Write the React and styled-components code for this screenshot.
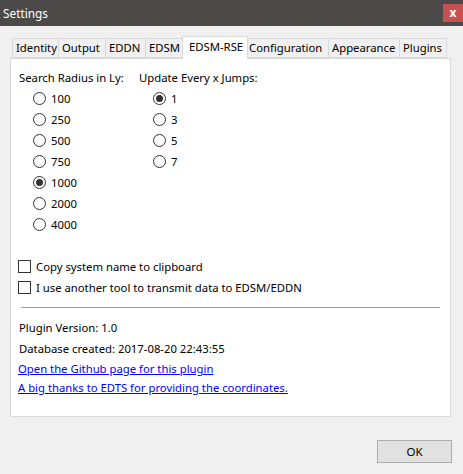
import React from "react";
import styled, { createGlobalStyle } from "styled-components";

const Global = createGlobalStyle`
  html, body { margin: 0; padding: 0; }
  body {
    font-family: "Noto Sans", "Open Sans", sans-serif;
    font-size: 11.3px;
    color: #000;
    background: #f0f0f0;
  }
`;

const Window = styled.div`
  width: 463px;
  height: 474px;
  display: flex;
  flex-direction: column;
  background: #f0f0f0;
  overflow: hidden;
`;

const TitleBar = styled.div`
  height: 26px;
  flex: none;
  background: #4b4a48;
  display: flex;
  align-items: flex-start;
  justify-content: space-between;
  color: #fff;
`;

const Title = styled.span`
  padding: 4px 0 0 3px;
  line-height: 18px;
  font-size: 11.8px;
`;

const CloseButton = styled.div`
  width: 20px;
  height: 18px;
  margin-top: 4px;
  background: #c75050;
  color: #fff;
  font-weight: bold;
  font-size: 12px;
  line-height: 16px;
  display: flex;
  align-items: center;
  justify-content: center;
`;

const Body = styled.div`
  flex: 1;
  display: flex;
  flex-direction: column;
  padding: 10px 12px 12px 10px;
`;

const TabStrip = styled.div`
  height: 22px;
  display: flex;
  align-items: flex-end;
  padding-left: 2px;
  position: relative;
  z-index: 1;
`;

const Tab = styled.div`
  box-sizing: border-box;
  width: ${(p) => p.$w}px;
  height: ${(p) => (p.$active ? 23 : 20)}px;
  margin: ${(p) => (p.$active ? "0 -2px -1px -2px" : "0")};
  padding-left: ${(p) => (p.$active ? 6 : 3)}px;
  background: ${(p) => (p.$active ? "#fff" : "#f0f0f0")};
  border: 1px solid #d9d9d9;
  border-bottom: ${(p) => (p.$active ? "none" : "1px solid #d9d9d9")};
  border-left: ${(p) => (p.$first || p.$active ? "1px solid #d9d9d9" : "none")};
  display: flex;
  align-items: center;
  line-height: 18px;
  white-space: nowrap;
  position: relative;
  z-index: ${(p) => (p.$active ? 2 : 1)};
  ${(p) => (p.$active ? "padding-bottom: 3px;" : "")}
`;

const Panel = styled.div`
  box-sizing: border-box;
  height: 359px;
  background: #fff;
  border: 1px solid #d9d9d9;
  padding: 9px 10px 0 8px;
  display: flex;
  flex-direction: column;
`;

const Columns = styled.div`
  display: flex;
`;

const Column = styled.div`
  width: ${(p) => p.$w}px;
  display: flex;
  flex-direction: column;
`;

const Heading = styled.div`
  height: 20px;
  line-height: 20px;
`;

const RadioRow = styled.label`
  height: 21px;
  display: flex;
  align-items: center;
  padding-left: 14px;
  gap: 5px;
`;

const RadioCircle = styled.span`
  box-sizing: border-box;
  width: 13px;
  height: 13px;
  border-radius: 50%;
  border: 1px solid #333;
  background: #fff;
  display: flex;
  align-items: center;
  justify-content: center;
  &::after {
    content: "";
    width: 7px;
    height: 7px;
    border-radius: 50%;
    background: ${(p) => (p.$checked ? "#333" : "transparent")};
  }
`;

const CheckGroup = styled.div`
  margin-top: 21px;
  display: flex;
  flex-direction: column;
`;

const CheckRow = styled.label`
  height: 21px;
  display: flex;
  align-items: center;
  margin-left: -1px;
  gap: 5px;
`;

const CheckBox = styled.span`
  box-sizing: border-box;
  width: 13px;
  height: 13px;
  border: 1px solid #333;
  background: #fff;
`;

const Separator = styled.div`
  height: 1px;
  margin: 9px 0 9px 2px;
  width: 419px;
  background: #a0a0a0;
`;

const InfoLine = styled.div`
  height: 21px;
  line-height: 21px;
`;

const LinkLine = styled.a`
  display: block;
  height: 19px;
  line-height: 19px;
  color: #0000ff;
  text-decoration: underline;
  margin-left: -1px;
`;

const Footer = styled.div`
  display: flex;
  justify-content: flex-end;
  margin-top: 23px;
`;

const OkButton = styled.button`
  box-sizing: border-box;
  width: 75px;
  height: 23px;
  margin-right: -1px;
  background: #e1e1e1;
  border: 1px solid #adadad;
  font-family: inherit;
  font-size: 11.5px;
  color: #000;
  padding: 0;
`;

const tabs = [
  { label: "Identity", w: 47 },
  { label: "Output", w: 47 },
  { label: "EDDN", w: 40 },
  { label: "EDSM", w: 38 },
  { label: "EDSM-RSE", w: 66, active: true },
  { label: "Configuration", w: 83 },
  { label: "Appearance", w: 71 },
  { label: "Plugins", w: 47 },
];

const radii = ["100", "250", "500", "750", "1000", "2000", "4000"];
const jumps = ["1", "3", "5", "7"];

function Radio({ label, checked }) {
  return (
    <RadioRow>
      <RadioCircle $checked={checked} />
      <span>{label}</span>
    </RadioRow>
  );
}

export default function App() {
  return (
    <Window>
      <Global />
      <TitleBar>
        <Title>Settings</Title>
        <CloseButton>x</CloseButton>
      </TitleBar>
      <Body>
        <TabStrip>
          {tabs.map((t, i) => (
            <Tab key={t.label} $w={t.w} $active={t.active} $first={i === 0}>
              {t.label}
            </Tab>
          ))}
        </TabStrip>
        <Panel>
          <Columns>
            <Column $w={120}>
              <Heading>Search Radius in Ly:</Heading>
              {radii.map((r) => (
                <Radio key={r} label={r} checked={r === "1000"} />
              ))}
            </Column>
            <Column $w={160}>
              <Heading>Update Every x Jumps:</Heading>
              {jumps.map((j) => (
                <Radio key={j} label={j} checked={j === "1"} />
              ))}
            </Column>
          </Columns>
          <CheckGroup>
            <CheckRow>
              <CheckBox />
              <span>Copy system name to clipboard</span>
            </CheckRow>
            <CheckRow>
              <CheckBox />
              <span>I use another tool to transmit data to EDSM/EDDN</span>
            </CheckRow>
          </CheckGroup>
          <Separator />
          <InfoLine>Plugin Version: 1.0</InfoLine>
          <InfoLine>Database created: 2017-08-20 22:43:55</InfoLine>
          <LinkLine href="#">Open the Github page for this plugin</LinkLine>
          <LinkLine href="#">A big thanks to EDTS for providing the coordinates.</LinkLine>
        </Panel>
        <Footer>
          <OkButton>OK</OkButton>
        </Footer>
      </Body>
    </Window>
  );
}
